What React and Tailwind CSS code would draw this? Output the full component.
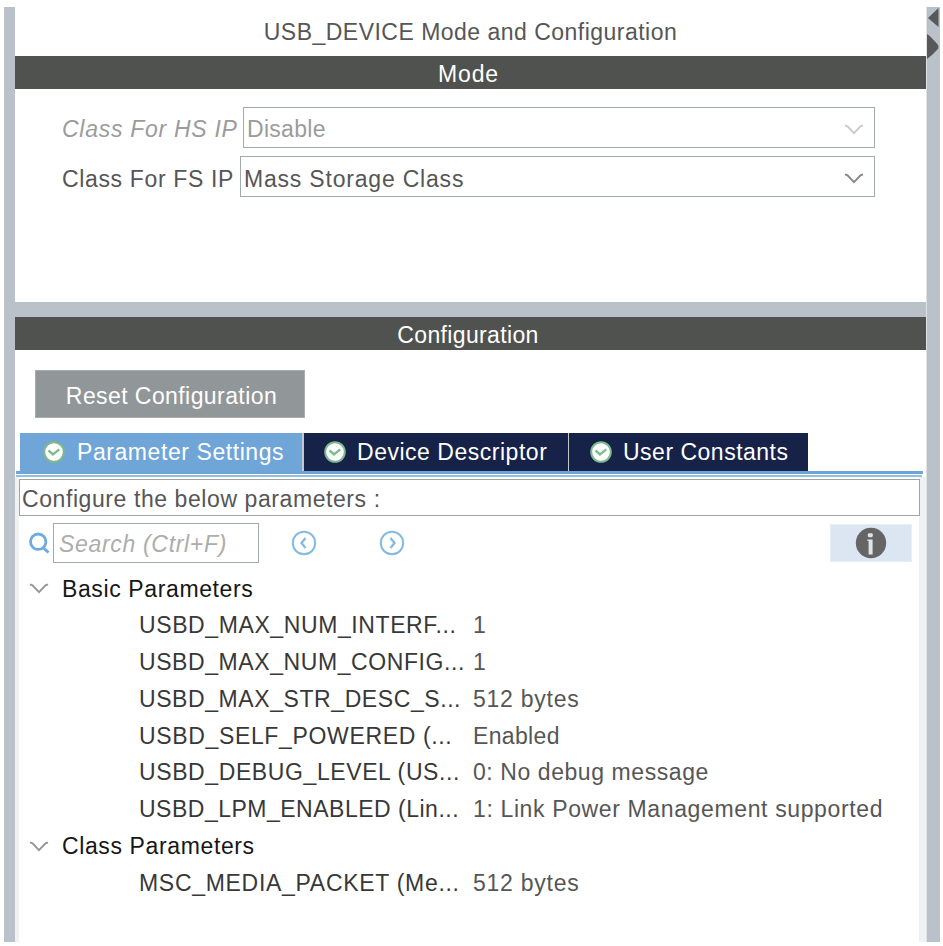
import React from "react";

function Chevron({ className }) {
  return (
    <svg className={className} width="20" height="12" viewBox="0 0 20 12" fill="none" stroke="currentColor" strokeWidth="1.9">
      <path d="M1 1.4 L3.5 2.4 L10 9.2 L16.5 2.4 L19 1.4" />
    </svg>
  );
}

function Check() {
  return (
    <svg className="shrink-0" width="22" height="22" viewBox="0 0 22 22" fill="none">
      <circle cx="11" cy="11" r="9.8" fill="#fff" stroke="#7db98a" strokeWidth="2" />
      <path d="M5.5 9.5 L10 13.5 L16.2 8.3" stroke="#7fbb8f" strokeWidth="2.4" />
    </svg>
  );
}

function RoundArrow({ d }) {
  return (
    <svg width="26" height="26" viewBox="0 0 26 26" fill="none" stroke="#84bae2">
      <circle cx="13" cy="13" r="11.2" strokeWidth="2" />
      <path d={d} strokeWidth="2.3" />
    </svg>
  );
}

function Select({ label, labelClass, value, valueClass, boxClass, arrowClass }) {
  return (
    <div className="flex h-[41px] items-center pl-[47px]">
      <span className={labelClass}>{label}</span>
      <div className={`flex h-[41px] items-center justify-between border-[1.5px] border-[#a4a9ae] pr-[10px] pl-[3px] ${boxClass}`}>
        <span className={valueClass}>{value}</span>
        <Chevron className={`mt-[4px] ${arrowClass}`} />
      </div>
    </div>
  );
}

function Group({ name, track }) {
  return (
    <div className="flex h-[36.8px] items-center pl-[10px] text-[#161616]">
      <Chevron className="mt-[2px] mr-[13px] text-[#959595]" />
      <span className={`pt-px ${track}`}>{name}</span>
    </div>
  );
}

function Row({ name, track, value, valueTrack }) {
  return (
    <div className="flex h-[36.8px] items-center pl-[120px]">
      <span className={`w-[334px] shrink-0 text-[#383838] ${track}`}>{name}</span>
      <span className={`text-[#565656] ${valueTrack}`}>{value}</span>
    </div>
  );
}

const basicRows = [
  ["USBD_MAX_NUM_INTERF...", "tracking-[0.6px]", "1", ""],
  ["USBD_MAX_NUM_CONFIG...", "tracking-[0.58px]", "1", ""],
  ["USBD_MAX_STR_DESC_S...", "tracking-[0.58px]", "512 bytes", "tracking-[0.75px]"],
  ["USBD_SELF_POWERED (...", "tracking-[0.65px]", "Enabled", "tracking-[0.35px]"],
  ["USBD_DEBUG_LEVEL (US...", "tracking-[0.6px]", "0: No debug message", "tracking-[0.57px]"],
  ["USBD_LPM_ENABLED (Lin...", "tracking-[0.5px]", "1: Link Power Management supported", "tracking-[0.63px]"],
];

export default function App() {
  return (
    <div className="h-[946px] w-[943px] overflow-hidden bg-white pt-[7px] pl-1 font-['Liberation_Sans',Arial,sans-serif] text-[23px] leading-[30px] whitespace-nowrap text-[#565656]">
      <div className="flex h-[935px] w-[936px] bg-[#bac1c8] pl-[11px]">
        <div className="flex w-[912px] shrink-0 flex-col border-r border-[#dfe2e5]">
          <section className="h-[295px] bg-white">
            <h1 className="flex h-[49px] items-center justify-center pt-px tracking-[0.48px]">USB_DEVICE Mode and Configuration</h1>
            <div className="flex h-[33px] items-center justify-center bg-[#505250] pt-[2px] pr-[4px] tracking-[0.9px] text-white">Mode</div>
            <div className="flex flex-col gap-[8px] pt-[18px]">
              <Select label="Class For HS IP" labelClass="w-[181px] pt-[3px] italic text-[#9b9b9b] tracking-[0.72px]" value="Disable" valueClass="pt-[3px] tracking-[0.3px] text-[#9b9b9b]" boxClass="w-[632px]" arrowClass="text-[#cacaca]" />
              <Select label="Class For FS IP" labelClass="w-[178px] pt-[5px] tracking-[0.65px]" value="Mass Storage Class" valueClass="pt-[5px] tracking-[0.8px]" boxClass="w-[635px]" arrowClass="text-[#868686]" />
            </div>
          </section>
          <section className="mt-[15px] flex flex-1 flex-col bg-white">
            <div className="flex h-[33px] items-center justify-center bg-[#505250] pt-[2px] pr-[5px] tracking-[0.35px] text-white">Configuration</div>
            <div className="pt-5 pl-5">
              <button className="block h-[48px] w-[270px] border border-[#a9adb0] bg-[#919699] pt-[3px] pl-[3px] tracking-[0.42px] text-white">Reset Configuration</button>
            </div>
            <div className="mt-[15px] flex h-[38px] pl-[5px] text-white">
              <div className="flex w-[282px] items-center bg-[#6fa5d7] pl-[23px]">
                <Check />
                <span className="ml-[12px] tracking-[0.57px]">Parameter Settings</span>
              </div>
              <div className="flex w-[266px] items-center border-l-2 border-[#c4c8cd] bg-[#162247] pl-[20px]">
                <Check />
                <span className="ml-[11px] tracking-[0.52px]">Device Descriptor</span>
              </div>
              <div className="flex w-[240px] items-center border-l border-[#c4c8cd] bg-[#162247] pl-[21px]">
                <Check />
                <span className="ml-[11px] tracking-[0.5px]">User Constants</span>
              </div>
            </div>
            <div className="mx-[1px] mr-[3px] h-[3px] bg-[#6fa5d7]" />
            <div className="mx-[1px] mt-px mr-[4px] h-[2px] bg-[#92bfe2]" />
            <div className="flex flex-1 flex-col border-r-[7px] border-l-[4px] border-[#f0f1f3]">
              <div className="-mr-px mt-[2px] flex h-[37px] items-center border-[1.5px] border-[#a0a4a8] pt-[2px] pl-[2px] tracking-[0.58px]">Configure the below parameters :</div>
              <div className="mt-[7px] flex h-[40px] items-center pl-[10px]">
                <svg width="21" height="22" viewBox="0 0 21 22" fill="none" stroke="#6fabdc">
                  <circle cx="9.2" cy="9.7" r="7.7" strokeWidth="2.8" />
                  <path d="M14 15.5 L19.5 20.5" strokeWidth="3" />
                </svg>
                <div className="ml-[3px] flex h-[40px] w-[206px] items-center border-[1.5px] border-[#a4a9ae] pt-px pl-[5px] tracking-[0.68px] text-[#adadad] italic">Search (Ctrl+F)</div>
                <div className="ml-[32px] flex gap-[62px]">
                  <RoundArrow d="M14.5 8 L10.5 13 L14.5 18" />
                  <RoundArrow d="M11.5 8 L15.5 13 L11.5 18" />
                </div>
                <div className="mr-[7px] ml-auto flex h-[38px] w-[82px] items-center justify-center border border-[#e7eef7] bg-[#dce6f3]">
                  <svg width="32" height="32" viewBox="0 0 32 32">
                    <circle cx="16" cy="16" r="15.2" fill="#656565" />
                    <rect x="12.8" y="6.2" width="5" height="4" rx="1.4" fill="#dfe4ea" />
                    <path d="M12.4 12.4 H17.6 V27.5 H13.6 V14 H12.4 Z" fill="#dfe4ea" />
                  </svg>
                </div>
              </div>
              <div className="pt-[7px]">
                <Group name="Basic Parameters" track="tracking-[0.62px]" />
                {basicRows.map(([name, track, value, valueTrack]) => (
                  <Row key={name} name={name} track={track} value={value} valueTrack={valueTrack} />
                ))}
                <Group name="Class Parameters" track="tracking-[0.62px]" />
                <Row name="MSC_MEDIA_PACKET (Me..." track="tracking-[0.7px]" value="512 bytes" valueTrack="tracking-[0.75px]" />
              </div>
            </div>
          </section>
        </div>
        <svg width="13" height="60" viewBox="0 0 13 60" fill="#56585a" className="shrink-0">
          <path d="M11.5 1 V20 L1 11 Z" />
          <path d="M0 27 C3 29 7 33 11 38 Q12 40 11 42 C7 46 4 49 0 52 Z" />
        </svg>
      </div>
    </div>
  );
}
